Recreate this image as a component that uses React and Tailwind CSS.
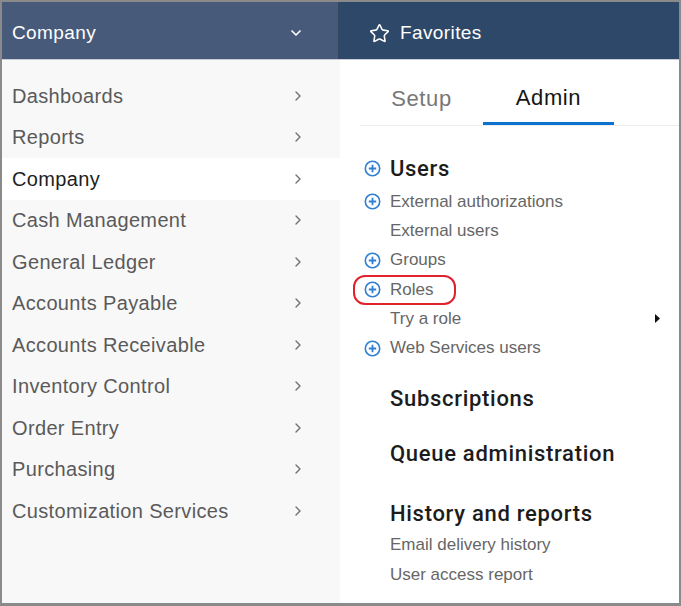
import { ChevronDown, ChevronRight, Star } from "lucide-react";

const menu = [
  "Dashboards",
  "Reports",
  "Company",
  "Cash Management",
  "General Ledger",
  "Accounts Payable",
  "Accounts Receivable",
  "Inventory Control",
  "Order Entry",
  "Purchasing",
  "Customization Services",
];

const PlusCircle = () => (
  <svg width="17" height="17" viewBox="0 0 17 17" fill="none">
    <circle cx="8.5" cy="8.5" r="7.2" stroke="#2f7fd2" strokeWidth="1.6" />
    <path d="M8.5 4.8v7.4M4.8 8.5h7.4" stroke="#2f7fd2" strokeWidth="1.8" />
  </svg>
);

const SubRow = ({ label, plus, children }) => (
  <div className="relative flex h-[29.3px] items-center">
    <div className="flex w-[30px] justify-start pl-[4px]">{plus && <PlusCircle />}</div>
    <span className="text-[17px] text-[#666]">{label}</span>
    {children}
  </div>
);

const Heading = ({ label, className = "" }) => (
  <div className={`flex h-[32px] items-center pl-[30px] ${className}`}>
    <span className="font-['Roboto',sans-serif] text-[22px] font-medium tracking-[0.7px] text-[#1c1c1c]">
      {label}
    </span>
  </div>
);

export default function App() {
  return (
    <div className="flex h-[606px] w-[681px] flex-col overflow-hidden border-2 border-b-[3px] border-[#8a8a8a] font-['Liberation_Sans',Arial,sans-serif]">
      {/* top bar */}
      <div className="flex h-[58px] shrink-0 border-b border-[#c9ced6]">
        <div className="flex w-[337px] items-center justify-between border-r border-[#34465f] bg-[#475a7a] pl-[10px] pr-[34px] pt-[5px]">
          <span className="text-[19px] tracking-[0.4px] text-white">Company</span>
          <ChevronDown size={16} strokeWidth={2.5} color="#fff" />
        </div>
        <div className="flex flex-1 items-center gap-[10px] bg-[#2d4868] pl-[30px] pt-[5px]">
          <Star size={21} strokeWidth={1.8} color="#fff" />
          <span className="text-[19px] tracking-[0.4px] text-white">Favorites</span>
        </div>
      </div>

      <div className="flex flex-1">
        {/* left menu */}
        <div className="w-[338px] bg-[#f8f8f8] pt-[15px]">
          {menu.map((item, i) => (
            <div
              key={item}
              className={`flex h-[41.5px] items-center justify-between pl-[10px] pr-[34px] ${
                i === 2 ? "bg-white text-[#1e1e1e]" : "text-[#5a5a5a]"
              }`}
            >
              <span className="text-[20px] tracking-[0.35px]">{item}</span>
              <ChevronRight size={16} strokeWidth={2} color="#707070" />
            </div>
          ))}
        </div>

        {/* right panel */}
        <div className="flex-1 bg-white pl-[20px]">
          <div className="flex h-[66px] border-b border-[#ececec]">
            <div className="flex w-[123px] items-center justify-center pt-[12px] text-[22px] tracking-[0.6px] text-[#777]">
              Setup
            </div>
            <div className="flex w-[131px] items-center justify-center border-b-[3px] border-[#0b73cf] pt-[12px] text-[22px] tracking-[0.6px] text-[#151515]">
              Admin
            </div>
          </div>

          <div className="mt-[26px] mb-[3px] flex h-[32px] items-center">
            <div className="flex w-[30px] pl-[4px]">
              <PlusCircle />
            </div>
            <span className="font-['Roboto',sans-serif] text-[22px] font-medium tracking-[0.7px] text-[#1c1c1c]">
              Users
            </span>
          </div>
          <SubRow label="External authorizations" plus />
          <SubRow label="External users" />
          <SubRow label="Groups" plus />
          <SubRow label="Roles" plus>
            <div className="absolute left-[-7px] top-0 h-[30px] w-[103px] rounded-[12px] border-2 border-[#e0222d]" />
          </SubRow>
          <SubRow label="Try a role">
            <svg className="ml-auto mr-[19px]" width="5" height="9" viewBox="0 0 5 9">
              <path d="M0 0 5 4.5 0 9Z" fill="#111" />
            </svg>
          </SubRow>
          <SubRow label="Web Services users" plus />

          <Heading label="Subscriptions" className="mt-[20px]" />
          <Heading label="Queue administration" className="mt-[23px]" />
          <Heading label="History and reports" className="mt-[28px]" />
          <div className="flex h-[30px] items-center pl-[30px] text-[17px] text-[#666]">
            Email delivery history
          </div>
          <div className="flex h-[30px] items-center pl-[30px] text-[17px] text-[#666]">
            User access report
          </div>
        </div>
      </div>
    </div>
  );
}
